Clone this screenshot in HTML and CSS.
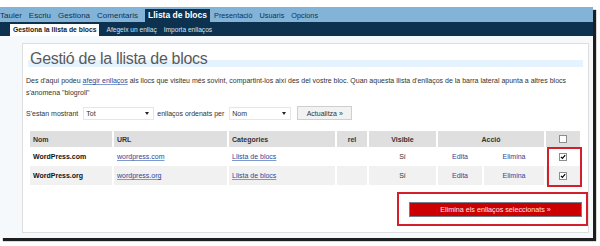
FILE: index.html
```html
<!DOCTYPE html>
<html lang="ca">
<head>
<meta charset="utf-8">
<title>Gestió de la llista de blocs</title>
<link rel="stylesheet" href="styles.css">
</head>
<body>
<div class="shot">
  <nav class="menu">
    <a>Tauler</a><a>Escriu</a><a>Gestiona</a><a>Comentaris</a><a class="on">Llista de blocs</a><a class="sm">Presentació</a><a class="sm">Usuaris</a><a class="sm">Opcions</a>
  </nav>
  <nav class="submenu">
    <a class="on">Gestiona la llista de blocs</a><a>Afegeix un enllaç</a><a>Importa enllaços</a>
  </nav>
  <div class="page">
    <div class="wrap">
      <h2>Gestió de la llista de blocs</h2>
      <p class="intro">Des d'aquí podeu <a class="lnk">afegir enllaços</a> als llocs que visiteu més sovint, compartint-los així des del vostre bloc. Quan aquesta llista d'enllaços de la barra lateral apunta a altres blocs<br>s'anomena "blogroll"</p>
      <div class="filter">
        <span>S'estan mostrant</span>
        <span class="sel tot">Tot<i class="arr"></i></span>
        <span>enllaços ordenats per</span>
        <span class="sel nom">Nom<i class="arr"></i></span>
        <span class="btn">Actualitza »</span>
      </div>
      <div class="tablebox">
        <table>
          <colgroup>
            <col class="w-nom"><col class="w-url"><col class="w-cat"><col class="w-rel"><col class="w-vis"><col class="w-ed"><col class="w-el"><col class="w-chk">
          </colgroup>
          <thead>
            <tr><th>Nom</th><th>URL</th><th>Categories</th><th class="c">rel</th><th class="c">Visible</th><th class="c" colspan="2">Acció</th><th class="c"><svg class="cb" width="8" height="8" viewBox="0 0 8 8"><rect x=".5" y=".5" width="7" height="7" fill="#fff" stroke="#8d8d8d"/></svg></th></tr>
          </thead>
          <tbody>
            <tr><td class="b">WordPress.com</td><td><a class="lnk">wordpress.com</a></td><td><a class="lnk">Llista de blocs</a></td><td></td><td class="c">Sí</td><td class="c"><a class="act">Edita</a></td><td class="c"><a class="act">Elimina</a></td><td class="c"><svg class="cb" width="8" height="8" viewBox="0 0 8 8"><rect x=".5" y=".5" width="7" height="7" fill="#fff" stroke="#8d8d8d"/><path d="M2 3.8l1.4 1.6L6.2 2.2" fill="none" stroke="#000" stroke-width="1.2"/></svg></td></tr>
            <tr class="alt"><td class="b">WordPress.org</td><td><a class="lnk">wordpress.org</a></td><td><a class="lnk">Llista de blocs</a></td><td></td><td class="c">Sí</td><td class="c"><a class="act">Edita</a></td><td class="c"><a class="act">Elimina</a></td><td class="c"><svg class="cb" width="8" height="8" viewBox="0 0 8 8"><rect x=".5" y=".5" width="7" height="7" fill="#fff" stroke="#8d8d8d"/><path d="M2 3.8l1.4 1.6L6.2 2.2" fill="none" stroke="#000" stroke-width="1.2"/></svg></td></tr>
          </tbody>
        </table>
        <div class="mark"></div>
      </div>
      <div class="actions">
        <div class="hl"><span class="delbtn">Elimina els enllaços seleccionats »</span></div>
      </div>
    </div>
  </div>
</div>
</body>
</html>
```

FILE: styles.css
```css
* { box-sizing: border-box; }

body {
  margin: 0;
  padding-top: 7px;
  width: 600px;
  height: 246px;
  overflow: hidden;
  background: #fff;
  font-family: "Liberation Sans", Arial, sans-serif;
  font-size: 7px;
  color: #333;
}

.shot {
  width: 593px;
  height: 231px;
  background: #f6f9fc;
  box-shadow: 3px 3px 1px #1e1e1e;
  display: flex;
  flex-direction: column;
}

.menu {
  height: 15px;
  background: #83b4d8;
  display: flex;
  align-items: flex-end;
  gap: 7px;
  font-size: 8px;
}
.menu a {
  color: #12324c;
  line-height: 13px;
  white-space: nowrap;
}
.menu a.sm { font-size: 7.3px; }
.menu a.on {
  background: #0d324f;
  color: #fff;
  font-weight: bold;
  font-size: 8.5px;
  padding: 0 3px;
  margin-right: -3px;
}

.submenu {
  height: 14px;
  background: #0d324f;
  display: flex;
  align-items: flex-end;
  gap: 7px;
  padding-left: 10px;
  font-size: 6.6px;
}
.submenu a {
  color: #d3e2ef;
  line-height: 12px;
  white-space: nowrap;
}
.submenu a.on {
  background: #fff;
  color: #1a1a1a;
  font-weight: bold;
  font-size: 6.8px;
  padding: 0 3px;
}

.page {
  flex: 1;
  padding: 7px 4px 5px 22px;
}

.wrap {
  height: 190px;
  background: #fff;
  border: 1px solid #dedede;
}

h2 {
  margin: 13px 5px 0;
  padding-left: 2px;
  height: 10px;
  font-size: 16px;
  letter-spacing: -0.3px;
  line-height: 3px;
  font-weight: normal;
  color: #5a5a5a;
  border-bottom: 7px solid #e5f3ff;
  white-space: nowrap;
}

.intro {
  margin: 8px 0 0 3px;
  line-height: 12px;
  white-space: nowrap;
}

.lnk {
  color: #2b479a;
  text-decoration: underline;
  text-decoration-color: #7c9bcc;
}

.filter {
  margin: 7px 0 0 3px;
  height: 14px;
  display: flex;
  align-items: center;
  white-space: nowrap;
}
.sel {
  height: 13px;
  margin: 0 3px 0 5px;
  border: 1px solid #e6e6e6;
  background: #fff;
  display: flex;
  align-items: center;
  justify-content: space-between;
  padding: 0 4px 0 2px;
}
.sel.tot { width: 71px; }
.sel.nom { width: 62px; }
.arr {
  width: 0;
  height: 0;
  border-left: 2px solid transparent;
  border-right: 2px solid transparent;
  border-top: 3px solid #222;
}
.btn {
  margin-left: 3px;
  width: 55px;
  height: 14px;
  background: #f2f2f2;
  border: 1px solid #cfcfcf;
  display: flex;
  align-items: center;
  justify-content: center;
  color: #333;
}

.tablebox {
  position: relative;
  margin: 11px 0 0 7px;
  width: 550px;
}
table {
  width: 550px;
  border-collapse: collapse;
  table-layout: fixed;
}
.w-nom { width: 83px; }
.w-url { width: 115px; }
.w-cat { width: 108px; }
.w-rel { width: 32px; }
.w-vis { width: 69px; }
.w-ed { width: 46px; }
.w-el { width: 62px; }
.w-chk { width: 35px; }

th {
  height: 16px;
  padding: 0 3px;
  background: #dfdfdf;
  font-weight: bold;
  text-align: left;
  color: #333;
  border-left: 2px solid #fff;
}
td {
  height: 19px;
  padding: 0 3px;
  border-left: 2px solid #fff;
  white-space: nowrap;
  color: #333;
}
th:first-child, td:first-child { border-left: 0; }
tr.alt td { background: #f1f1f1; }
td.b { font-weight: bold; color: #111; }
.c { text-align: center; }
.act { color: #2b479a; }
.cb { display: block; margin: 0 auto; }

.mark {
  position: absolute;
  left: 517px;
  top: 16px;
  width: 35px;
  height: 40px;
  border: 2px solid #d21f2b;
}

.actions {
  display: flex;
  justify-content: flex-end;
  margin-top: 7px;
}
.hl {
  width: 191px;
  height: 34px;
  border: 2px solid #d21f2b;
  padding: 8px 4px 0 10px;
}
.delbtn {
  display: flex;
  width: 173px;
  height: 15px;
  background: #cc0000;
  border: 1px solid #6f8090;
  color: #fde8ea;
  align-items: center;
  justify-content: center;
  font-size: 7.2px;
  white-space: nowrap;
}
```
